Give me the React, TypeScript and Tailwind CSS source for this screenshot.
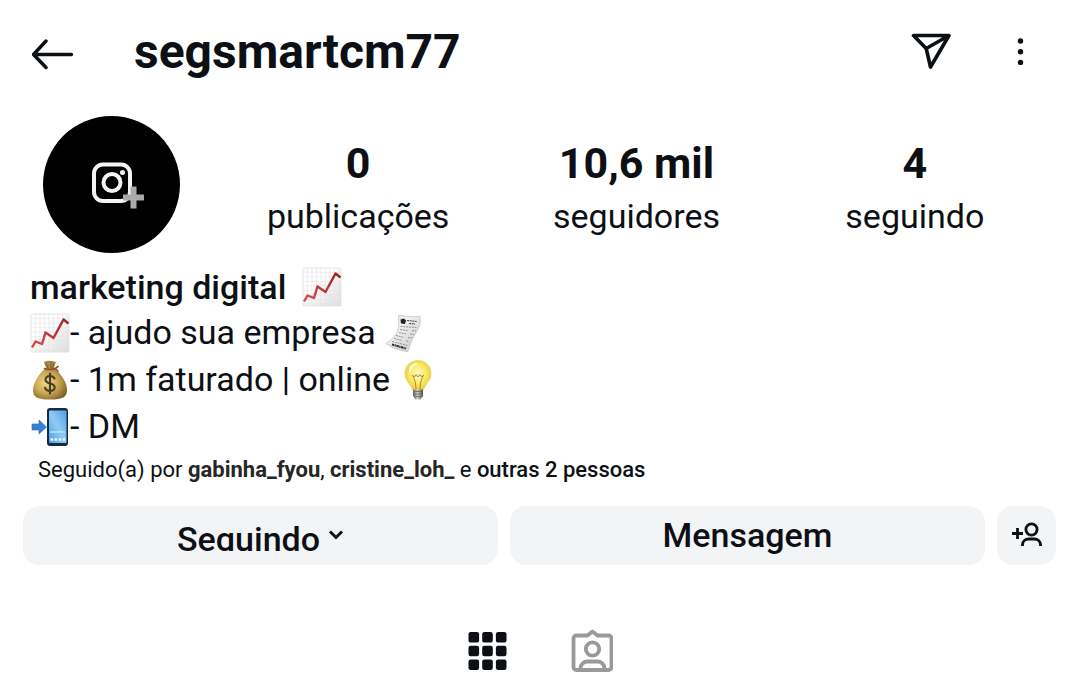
import type { ReactNode } from 'react';

const stats = [
    { value: '0', label: 'publicações' },
    { value: '10,6 mil', label: 'seguidores' },
    { value: '4', label: 'seguindo' },
];

function ChartEmoji() {
    return (
        <svg viewBox="0 0 40 40" className="h-10 w-10 shrink-0" role="img" aria-label="Gráfico subindo">
            <defs>
                <linearGradient id="chartPaper" x1="0" y1="0" x2="1" y2="1">
                    <stop offset="0.4" stopColor="#fefefe" />
                    <stop offset="1" stopColor="#dcdcdc" />
                </linearGradient>
                <linearGradient id="chartLine" x1="0" y1="1" x2="1" y2="0">
                    <stop offset="0" stopColor="#e04a48" />
                    <stop offset="1" stopColor="#98232a" />
                </linearGradient>
            </defs>
            <rect x="1" y="1" width="38" height="38" rx="1" fill="url(#chartPaper)" stroke="#dedede" strokeWidth="0.8" />
            <path
                d="M5.5 1v38M10 1v38M14.500 1v38M19 1v38M23.500 1v38M28 1v38M32.500 1v38M37 1v38M1 5.500h38M1 10h38M1 14.500h38M1 19h38M1 23.500h38M1 28h38M1 32.500h38M1 37h38"
                stroke="#e6e3e4"
                strokeWidth="0.6"
            />
            <path d="M2 34.500 5.500 28.500 12 31 15.500 19.500 23.500 25 33.500 6.500 38.500 10.500" fill="none" stroke="url(#chartLine)" strokeWidth="2.400" strokeLinejoin="round" />
        </svg>
    );
}

function ReceiptEmoji() {
    return (
        <svg viewBox="0 0 40 40" className="h-10 w-10 shrink-0" role="img" aria-label="Recibo">
            <defs>
                <linearGradient id="receiptPaper" x1="0" y1="0" x2="1" y2="1">
                    <stop offset="0" stopColor="#d5d5d5" />
                    <stop offset="0.35" stopColor="#f1f1f1" />
                    <stop offset="1" stopColor="#c9c9c9" />
                </linearGradient>
            </defs>
            <path d="M15 2c7 1.500 14 2 21 1.500 1 8-1 12-5 18-4 6-5 11-7 17-8-.5-15-3-22-8 7-5 11-9 12.500-16C15.200 10 14 4 15 2Z" fill="url(#receiptPaper)" stroke="#bdbdbd" strokeWidth="0.7" />
            <path d="M16.500 6.500 20 5.500l2 2-1 3.500-4-.5Z" fill="#252525" />
            <path d="M23 7.500l10 1M25 10.500l6 .5" stroke="#555" strokeWidth="1.200" strokeDasharray="2 .6" />
            <path d="M16.500 13.500l17 1M16 16.500l8 1m4 0 4 .5M15 19.500l7 1.500m4 0 4 .5M12 22.500l8 2m4 0 4 .5M10 25.500l8 2m4 .5 3 .5M8 28.500l16 4" stroke="#888" strokeWidth="0.9" strokeDasharray="2 .8" />
            <path d="M8 31.500l14 4" stroke="#333" strokeWidth="2.200" strokeDasharray="2.500 .5 1 .5" />
        </svg>
    );
}

function MoneyBagEmoji() {
    return (
        <svg viewBox="0 0 40 40" className="h-10 w-10 shrink-0" role="img" aria-label="Saco de dinheiro">
            <defs>
                <radialGradient id="bagBody" cx="0.4" cy="0.45" r="0.65">
                    <stop offset="0" stopColor="#eedb91" />
                    <stop offset="0.55" stopColor="#c8a650" />
                    <stop offset="1" stopColor="#80602a" />
                </radialGradient>
            </defs>
            <path d="M14 2c4-2 8-1 12 0l-2.500 7h-7Z" fill="#aa8744" />
            <path d="M16 3l2 5m3-6v6m3-5-1.500 5" stroke="#725426" strokeWidth="0.8" />
            <path d="M15 9C10 13 3 22 3 30c0 7 4 9.500 17 9.500S37 37 37 30c0-8-6-16-12-21Z" fill="url(#bagBody)" />
            <path d="M14.500 8.500c3 1.200 8 1.200 11.500-.5l2-1.500M25 8.500l3 2.500" fill="none" stroke="#8f4c28" strokeWidth="1.600" strokeLinecap="round" />
            <path
                d="M24.500 18.500c-1-2-3-2.500-4.500-2.500-2.800 0-4.500 1.500-4.500 3.700 0 5 9.200 2.600 9.200 7.600 0 2.300-2 3.700-4.700 3.700-2.500 0-4.300-1-5-3.200M20 13.500v20"
                fill="none"
                stroke="#4a3d20"
                strokeWidth="2.100"
                strokeLinecap="round"
            />
        </svg>
    );
}

function BulbEmoji() {
    return (
        <svg viewBox="0 0 40 40" className="h-10 w-10 shrink-0" role="img" aria-label="Lâmpada">
            <defs>
                <radialGradient id="bulbGlass" cx="0.5" cy="0.45" r="0.6">
                    <stop offset="0" stopColor="#fffbd0" />
                    <stop offset="0.5" stopColor="#faeb68" />
                    <stop offset="1" stopColor="#e7c52e" />
                </radialGradient>
                <linearGradient id="bulbBase" x1="0" x2="1">
                    <stop offset="0" stopColor="#6c685c" />
                    <stop offset="0.45" stopColor="#d6d3c6" />
                    <stop offset="1" stopColor="#56534b" />
                </linearGradient>
            </defs>
            <path d="M20 .5C12 .5 7 6.500 7 13.500c0 7 5.500 10 8 17h10c2.500-7 8-10 8-17C33 6.500 28 .5 20 .5Z" fill="url(#bulbGlass)" stroke="#dfc955" strokeWidth="0.6" />
            <path d="M18 30c0-6-1-10-3.500-15l2 2 1.500-2.500 2 2.500 2-2.500 1.500 2.500 2-2C23 20 22 24 22 30" fill="none" stroke="#ab8930" strokeWidth="1" />
            <path d="M12 12c0-4 2-7 6-8" fill="none" stroke="#fffce5" strokeWidth="2" strokeLinecap="round" />
            <path d="M15 29.500h10V36l-2.500 3.500h-5L15 36Z" fill="url(#bulbBase)" />
            <path d="M15 32l10-1M15 34.500l10-1M16 37l8-1" stroke="#5b5b5b" strokeWidth="0.8" />
        </svg>
    );
}

function PhoneArrowEmoji() {
    return (
        <svg viewBox="0 0 40 40" className="h-10 w-10 shrink-0" role="img" aria-label="Celular com seta">
            <defs>
                <linearGradient id="phoneScreen" x1="1" y1="0" x2="0" y2="1">
                    <stop offset="0" stopColor="#4fa0e2" />
                    <stop offset="0.5" stopColor="#8fcbf5" />
                    <stop offset="1" stopColor="#4b9ee3" />
                </linearGradient>
            </defs>
            <rect x="17" y="1" width="21" height="38" rx="3" fill="#172d3e" />
            <rect x="19" y="3.500" width="17.500" height="32.500" rx="1" fill="url(#phoneScreen)" />
            <path d="M20 25h15" stroke="#b4e0fa" strokeWidth="1.500" />
            <path d="M20.500 32.500h15" stroke="#e4f6ff" strokeWidth="2.600" strokeDasharray="2.700 1.300" />
            <path d="M2 17h7v-4l7.500 7-7.500 7v-4H2Z" fill="#397fd6" stroke="#2b68bc" strokeWidth="0.6" />
        </svg>
    );
}

function BioLine({ children }: { children: ReactNode }) {
    return <p className="flex h-[47px] items-center whitespace-pre">{children}</p>;
}

export default function App() {
    return (
        <div className="min-h-screen bg-white font-['Roboto',sans-serif] text-[#0c1014]">
            <header className="flex h-26 items-center pr-11 pl-8">
                <button aria-label="Voltar" className="mt-1">
                    <svg viewBox="0 0 42 32" className="h-8 w-[42px]" fill="none" stroke="currentColor" strokeWidth="3.400" strokeLinecap="round" strokeLinejoin="round">
                        <path d="M39.500 16.500H2M14 3 1.500 16.500 14 29.500" />
                    </svg>
                </button>
                <h1 className="ml-15 text-5xl font-bold">segsmartcm77</h1>
                <div className="ml-auto flex items-center gap-[53px]">
                    <button aria-label="Compartilhar">
                        <svg viewBox="0 0 40 38" className="h-[38px] w-10" fill="none" stroke="currentColor" strokeWidth="3.600" strokeLinejoin="round">
                            <path d="M2.500 2.500H38L19.500 34 15.200 15.500ZM15.200 15.500 38 2.500" />
                        </svg>
                    </button>
                    <button aria-label="Mais opções">
                        <svg viewBox="0 0 32 32" className="h-8 w-8" fill="currentColor">
                            <circle cx="16.500" cy="5" r="2.700" />
                            <circle cx="16.500" cy="15.700" r="2.700" />
                            <circle cx="16.500" cy="26.400" r="2.700" />
                        </svg>
                    </button>
                </div>
            </header>

            <main>
                <section className="flex items-center pt-3 pr-[26px] pl-[43px]">
                    <div className="flex size-[137px] shrink-0 items-center justify-center rounded-full bg-black">
                        <svg viewBox="0 0 54 48" className="h-12 w-[54px] overflow-visible" fill="none">
                            <rect x="9" y="3.500" width="36" height="36.500" rx="9" stroke="#f3f3f3" strokeWidth="4" />
                            <circle cx="27" cy="21.500" r="8.500" stroke="#f3f3f3" strokeWidth="4" />
                            <circle cx="37.500" cy="11.500" r="2.500" fill="#f3f3f3" />
                            <path d="M48.500 25.500v22M38 36.500h21" stroke="#aaa" strokeWidth="6" />
                        </svg>
                    </div>
                    <dl className="ml-[39px] grid flex-1 grid-cols-3 pt-2">
                        {stats.map((stat) => (
                            <div key={stat.label} className="flex flex-col-reverse items-center">
                                <dt className="text-[34px] leading-[52px]">{stat.label}</dt>
                                <dd className="text-[43px] leading-[54px] font-bold">{stat.value}</dd>
                            </div>
                        ))}
                    </dl>
                </section>

                <section className="px-[30px] pt-3 text-[34px]">
                    <h2 className="flex h-11 items-center gap-4 font-medium">
                        marketing digital
                        <ChartEmoji />
                    </h2>
                    <BioLine>
                        <ChartEmoji />- ajudo sua empresa <ReceiptEmoji />
                    </BioLine>
                    <BioLine>
                        <MoneyBagEmoji />- 1m faturado | online <BulbEmoji />
                    </BioLine>
                    <BioLine>
                        <PhoneArrowEmoji />- DM
                    </BioLine>
                </section>

                <p className="px-[38px] text-[22px] leading-10">
                    Seguido(a) por <b className="text-[#262626]">gabinha_fyou</b>, <b className="text-[#262626]">cristine_loh_</b> e{' '}
                    <span className="font-medium">outras 2 pessoas</span>
                </p>

                <div className="flex gap-3 pt-4 pr-6 pl-[23px] text-[34px] font-medium">
                    <button className="flex h-[59px] flex-1 items-center justify-center gap-2 rounded-2xl bg-[#f3f4f6]">
                        <span className="h-[30px] overflow-hidden leading-9">Seguindo</span>
                        <svg viewBox="0 0 16 16" className="size-4" fill="none" stroke="currentColor" strokeWidth="3">
                            <path d="M2 3.500 8 9.500 14 3.500" />
                        </svg>
                    </button>
                    <button className="h-[59px] flex-1 rounded-2xl bg-[#f3f4f6]">Mensagem</button>
                    <button aria-label="Sugestões" className="flex size-[59px] items-center justify-center rounded-2xl bg-[#f3f4f6]">
                        <svg viewBox="0 0 32 28" className="h-7 w-8" fill="none" stroke="currentColor" strokeWidth="2.800">
                            <circle cx="20.500" cy="7.500" r="5.600" />
                            <path d="M11.500 24v-1.500a6 6 0 0 1 6-5.500h6a6 6 0 0 1 6 5.500V24M1 11.500h11M6.500 6v11" />
                        </svg>
                    </button>
                </div>

                <nav className="flex items-center justify-center gap-16 pt-16">
                    <button aria-label="Publicações">
                        <svg viewBox="0 0 40 40" className="size-10" fill="currentColor">
                            {[1, 14.7, 28.4].map((y) =>
                                [1.5, 15.2, 28.9].map((x) => <rect key={`${x}-${y}`} x={x} y={y} width="10.600" height="10.600" rx="2.200" />),
                            )}
                        </svg>
                    </button>
                    <button aria-label="Marcações" className="text-[#999]">
                        <svg viewBox="0 0 42 44" className="h-11 w-[42px]" fill="none" stroke="currentColor" strokeWidth="3.800" strokeLinejoin="round">
                            <path d="M5.500 6.500h11L21.500 2.500l5 4H37.500a3 3 0 0 1 3 3V38a3 3 0 0 1-3 3H5.500a3 3 0 0 1-3-3V9.500a3 3 0 0 1 3-3Z" />
                            <circle cx="21.500" cy="20" r="6.700" />
                            <path d="M9.500 41v-2a7 7 0 0 1 7-6.500h10a7 7 0 0 1 7 6.500v2" />
                        </svg>
                    </button>
                </nav>
            </main>
        </div>
    );
}
